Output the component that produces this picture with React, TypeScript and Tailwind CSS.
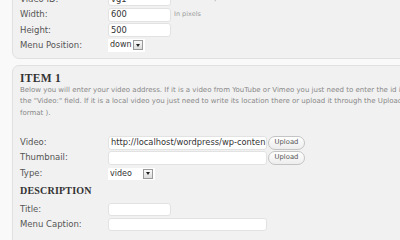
import React from 'react'

function Field({ value = '', w }: { value?: string; w: string }) {
  return (
    <div className={`${w} h-full bg-white border border-[#e2e2e2] rounded-[3px] px-[2px] flex items-center overflow-hidden whitespace-nowrap text-[8.3px] text-[#333]`}>
      {value}
    </div>
  )
}

function Select({ value, w }: { value: string; w: string }) {
  return (
    <div className={`${w} h-full bg-white flex items-center justify-between pl-[2px] pr-[2px] text-[8px] text-[#333]`}>
      <span>{value}</span>
      <span className="w-[10px] h-[10px] border border-[#9a9a9a] bg-gradient-to-b from-[#fafafa] to-[#dcdcdc] flex items-center justify-center">
        <span className="w-0 h-0 border-l-[2.5px] border-r-[2.5px] border-t-[3px] border-l-transparent border-r-transparent border-t-[#222]" />
      </span>
    </div>
  )
}

function UploadBtn() {
  return (
    <div className="ml-[1px] w-[37px] h-[14px] rounded-full border border-[#c4c4c4] bg-gradient-to-b from-white to-[#ededed] flex items-center justify-center text-[6.8px] text-[#555]">
      Upload
    </div>
  )
}

function Row({ label, h, children }: { label: string; h: string; children: React.ReactNode }) {
  return (
    <div className={`flex items-center ${h}`}>
      <div className="w-[88px] text-[8.5px] text-[#555]">{label}</div>
      <div className="flex items-center h-full">{children}</div>
    </div>
  )
}

export default function App() {
  return (
    <div className="w-[400px] h-[240px] overflow-hidden bg-[#f9f9f9] font-['DejaVu_Sans',sans-serif]">
      {/* general settings panel, scrolled so only its bottom shows */}
      <div className="ml-[12px] -mt-[20px] w-[560px] bg-[#f1f1f1] border border-[#e0e0e0] rounded-b-[7px] pl-[7px] pt-[11px] pb-[6px] flex flex-col gap-[1.5px]">
        <Row label="Video ID:" h="h-[14px]">
          <Field value="vg1" w="w-[63px]" />
          <span className="ml-[3px] text-[6.5px] text-[#999]">Must be unique</span>
        </Row>
        <Row label="Width:" h="h-[14px]">
          <Field value="600" w="w-[63px]" />
          <span className="ml-[3px] text-[6.5px] text-[#999]">In pixels</span>
        </Row>
        <Row label="Height:" h="h-[14px]">
          <Field value="500" w="w-[63px]" />
        </Row>
        <Row label="Menu Position:" h="h-[13px]">
          <Select value="down" w="w-[37px]" />
        </Row>
      </div>

      {/* item panel */}
      <div className="ml-[12px] mt-[6px] w-[560px] bg-[#f1f1f1] border border-[#e0e0e0] rounded-t-[7px] pl-[7px] pt-[5px] pb-[10px]">
        <h3 className="h-[14px] leading-[14px] font-['Liberation_Serif',serif] font-bold text-[11.5px] text-[#333] tracking-[0.3px]">
          ITEM 1
        </h3>
        <div className="text-[7px] leading-[11.5px] text-[#888] whitespace-nowrap">
          <div>Below you will enter your video address. If it is a video from YouTube or Vimeo you just need to enter the id in</div>
          <div>the "Video:" field. If it is a local video you just need to write its location there or upload it through the Upload button ( flv or mp4</div>
          <div>format ).</div>
        </div>

        <div className="mt-[16.5px] flex flex-col gap-[1px]">
          <Row label="Video:" h="h-[14px]">
            <Field value="http://localhost/wordpress/wp-conten" w="w-[159px]" />
            <UploadBtn />
          </Row>
          <Row label="Thumbnail:" h="h-[14px]">
            <Field w="w-[159px]" />
            <UploadBtn />
          </Row>
          <div className="mt-[2px]">
            <Row label="Type:" h="h-[12.5px]">
              <Select value="video" w="w-[47px]" />
            </Row>
          </div>
        </div>

        <h4 className="mt-[5px] h-[12px] leading-[12px] font-['Liberation_Serif',serif] font-bold text-[10px] text-[#333] tracking-[0.2px]">
          DESCRIPTION
        </h4>
        <div className="mt-[6px] flex flex-col gap-[2px]">
          <Row label="Title:" h="h-[13px]">
            <Field w="w-[63px]" />
          </Row>
          <Row label="Menu Caption:" h="h-[13px]">
            <Field w="w-[159px]" />
          </Row>
        </div>
      </div>
    </div>
  )
}
